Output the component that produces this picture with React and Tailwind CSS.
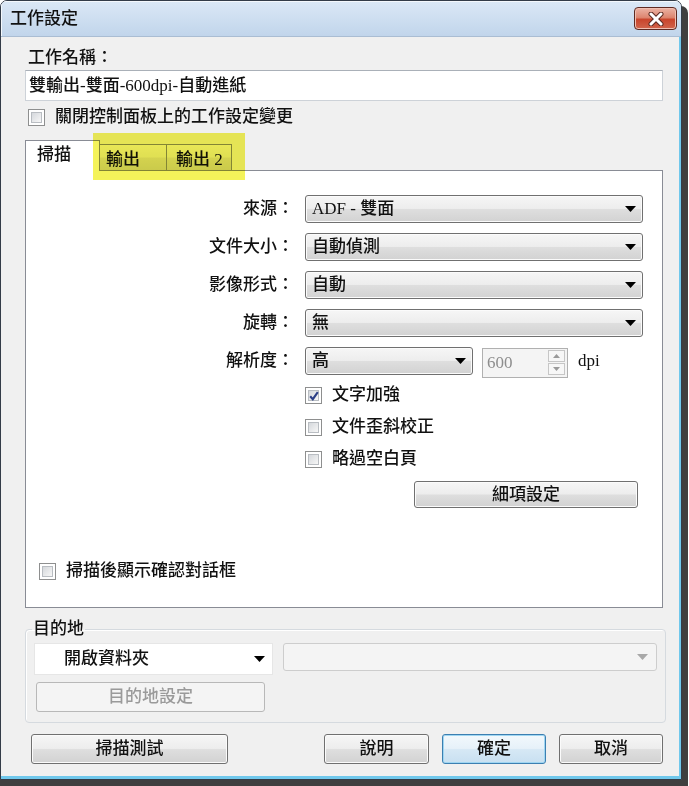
import React from 'react';

const btnBg =
  'bg-[linear-gradient(to_bottom,#f6f6f6,#ededed_48%,#dedede_52%,#d2d2d2)] shadow-[inset_0_0_0_1px_#fbfbfb]';

function Check({ checked }) {
  return (
    <span className="relative flex-none w-[17px] h-[17px] border border-[#8e8f8f] bg-white p-[2px]">
      <span className="block w-full h-full border border-[#b9bdc2] bg-[linear-gradient(135deg,#d5d8dc,#f7f7f7)]" />
      {checked && (
        <svg className="absolute left-[1px] top-[1px]" width="14" height="14" viewBox="0 0 14 14">
          <path d="M3.2 7.2 L5.8 10.2 L10.8 3.2" fill="none" stroke="#2c3f86" strokeWidth="2.1" />
        </svg>
      )}
    </span>
  );
}

function CheckRow({ label, checked, className = '' }) {
  return (
    <div className={`flex items-center gap-[10px] h-[22px] ${className}`}>
      <Check checked={checked} />
      <span className="leading-[22px] whitespace-nowrap">{label}</span>
    </div>
  );
}

function Arrow({ color = '#000' }) {
  return (
    <svg width="11" height="6" viewBox="0 0 11 6" className="flex-none">
      <path d="M0 0H11L5.5 6Z" fill={color} />
    </svg>
  );
}

function Select({ value, width }) {
  return (
    <div
      className={`h-[28px] flex items-center justify-between pl-[6px] pr-[6px] rounded-[3px] border border-[#707070] ${btnBg}`}
      style={{ width }}
    >
      <span className="leading-[22px] whitespace-nowrap">{value}</span>
      <Arrow />
    </div>
  );
}

function Button({ label, width, primary, disabled }) {
  let cls = `border-[#707070] ${btnBg}`;
  if (primary)
    cls =
      'border-[#3c7fb1] bg-[linear-gradient(to_bottom,#f2f8fc,#e6f1f9_48%,#d6e8f5_52%,#c8e0f1)] shadow-[inset_0_0_0_1px_#9fd6f2]';
  if (disabled) cls = 'border-[#b8b8b8] bg-[#f4f4f4] text-[#9a9a9a]';
  return (
    <div
      className={`h-[30px] flex-none flex items-center justify-center rounded-[3px] border ${cls}`}
      style={{ width }}
    >
      <span className="leading-[22px]">{label}</span>
    </div>
  );
}

function FormRow({ label, children }) {
  return (
    <div className="flex items-center h-[28px]">
      <div className="w-[268px] text-right leading-[22px] whitespace-nowrap">{label}</div>
      <div className="ml-[11px] flex items-center">{children}</div>
    </div>
  );
}

export default function App() {
  return (
    <div className="relative w-[689px] h-[786px] bg-white overflow-hidden font-['Liberation_Serif','Noto_Sans_CJK_TC',serif] font-medium text-[17px] text-[#111]">
      <div className="w-[682px] h-[780px] flex flex-col rounded-t-[7px] border border-[#333c48] bg-[#f0f0f0] shadow-[6px_6px_0_#3f3f3f,0_6px_0_#3f3f3f] overflow-hidden">
        {/* title bar */}
        <div className="h-[36px] flex-none flex items-center justify-between pl-[9px] pr-[4px] bg-[linear-gradient(to_bottom,#dbe8f6,#c1d5eb)] shadow-[inset_1px_1px_0_#f4f8fc] border-b border-[#aabdd3]">
          <span className="leading-[22px]">工作設定</span>
          <div className="w-[43px] h-[23px] rounded-[4px] border border-[#5e2a22] bg-[linear-gradient(to_bottom,#ebb3a4,#dd8670_45%,#c9452c_55%,#d1654c)] shadow-[inset_0_0_0_1px_#f0bfb2] flex items-center justify-center">
            <svg width="16" height="14" viewBox="0 0 16 14">
              <path d="M3 2 L13 12 M13 2 L3 12" stroke="#5a2a22" strokeWidth="5" strokeLinecap="round" />
              <path d="M3 2 L13 12 M13 2 L3 12" stroke="#ffffff" strokeWidth="3" strokeLinecap="round" />
            </svg>
          </div>
        </div>

        {/* client area */}
        <div className="flex-1 flex flex-col pl-[24px] pr-[16px] border-r-[2px] border-b-[3px] border-[#70c8ec]">
          <div className="mt-[10px] h-[22px] leading-[22px] pl-[3px]">工作名稱：</div>
          <div className="mt-[1px] h-[31px] flex items-center pl-[3px] bg-white border border-[#cdd2d8] border-t-[#aab0b8]">
            <span className="leading-[22px] whitespace-nowrap">雙輸出-雙面-600dpi-自動進紙</span>
          </div>
          <CheckRow className="mt-[5px] ml-[3px]" label="關閉控制面板上的工作設定變更" />

          {/* tabs */}
          <div className="relative mt-[12px] h-[30px] flex items-end">
            <div className="relative z-10 w-[75px] h-[31px] -mb-[1px] bg-white border border-b-0 border-[#898c95] pl-[11px] pt-[3px] leading-[22px]">
              掃描
            </div>
            <div className="w-[67px] h-[26px] border border-l-0 border-b-0 border-[#898c95] bg-[linear-gradient(to_bottom,#f3f3f3,#ebebeb_48%,#dedede_52%,#d4d4d4)] pl-[6px] pt-[4px] leading-[22px]">
              輸出
            </div>
            <div className="w-[65px] h-[26px] border border-l-0 border-b-0 border-[#898c95] bg-[linear-gradient(to_bottom,#f3f3f3,#ebebeb_48%,#dedede_52%,#d4d4d4)] pl-[9px] pt-[4px] leading-[22px] whitespace-nowrap">
              輸出 2
            </div>
            <div className="absolute z-20 left-[68px] -top-[7px] w-[152px] h-[47px] bg-[#f4f35a] mix-blend-multiply pointer-events-none" />
          </div>

          {/* tab panel */}
          <div className="h-[438px] bg-white border border-[#898c95] pt-[24px] flex flex-col">
            <div className="flex flex-col gap-[10px]">
              <FormRow label="來源：">
                <Select value="ADF - 雙面" width={338} />
              </FormRow>
              <FormRow label="文件大小：">
                <Select value="自動偵測" width={338} />
              </FormRow>
              <FormRow label="影像形式：">
                <Select value="自動" width={338} />
              </FormRow>
              <FormRow label="旋轉：">
                <Select value="無" width={338} />
              </FormRow>
              <FormRow label="解析度：">
                <Select value="高" width={168} />
                <div className="ml-[9px] mt-[3px] w-[86px] h-[30px] flex items-center justify-between pl-[4px] pr-[2px] bg-[#f4f4f4] border border-[#b0b0b0]">
                  <span className="text-[#8d8d8d] leading-[22px]">600</span>
                  <div className="flex flex-col gap-[1px]">
                    <div className="w-[17px] h-[12px] border border-[#c6c6c6] bg-[#f7f7f7] flex items-center justify-center">
                      <svg width="7" height="4" viewBox="0 0 7 4"><path d="M0 4H7L3.5 0Z" fill="#9a9a9a" /></svg>
                    </div>
                    <div className="w-[17px] h-[12px] border border-[#c6c6c6] bg-[#f7f7f7] flex items-center justify-center">
                      <svg width="7" height="4" viewBox="0 0 7 4"><path d="M0 0H7L3.5 4Z" fill="#9a9a9a" /></svg>
                    </div>
                  </div>
                </div>
                <span className="ml-[10px] leading-[22px]">dpi</span>
              </FormRow>
            </div>

            <div className="mt-[9px] pl-[279px] flex flex-col gap-[10px]">
              <CheckRow label="文字加強" checked />
              <CheckRow label="文件歪斜校正" />
              <CheckRow label="略過空白頁" />
            </div>

            <div className="mt-[11px] ml-[388px] w-[224px] h-[27px] flex items-center justify-center rounded-[3px] border border-[#707070] bg-[linear-gradient(to_bottom,#f6f6f6,#ededed_48%,#dedede_52%,#d2d2d2)] shadow-[inset_0_0_0_1px_#fbfbfb]">
              <span className="leading-[22px]">細項設定</span>
            </div>

            <CheckRow className="mt-[52px] ml-[13px]" label="掃描後顯示確認對話框" />
          </div>

          {/* destination group */}
          <fieldset className="mt-[10px] w-[640px] h-[105px] border border-[#d5dadf] rounded-[4px] shadow-[inset_1px_1px_0_#ffffff] px-[8px]">
            <legend className="ml-[-2px] px-[1px] h-[22px] leading-[22px]">目的地</legend>
            <div className="mt-[3px] flex items-start">
              <div className="w-[239px] h-[32px] flex items-center justify-between pl-[29px] pr-[7px] bg-white border border-[#e6e6e6]">
                <span className="leading-[22px]">開啟資料夾</span>
                <Arrow />
              </div>
              <div className="ml-[10px] w-[374px] h-[28px] flex items-center justify-end pr-[8px] rounded-[3px] bg-[#f4f4f4] border border-[#cdcdcd]">
                <Arrow color="#a8a8a8" />
              </div>
            </div>
            <div className="mt-[7px] ml-[2px]">
              <Button label="目的地設定" width={229} disabled />
            </div>
          </fieldset>

          {/* bottom buttons */}
          <div className="mt-[11px] flex">
            <div className="ml-[6px]">
              <Button label="掃描測試" width={197} />
            </div>
            <div className="ml-[96px]">
              <Button label="說明" width={105} />
            </div>
            <div className="ml-[13px]">
              <Button label="確定" width={104} primary />
            </div>
            <div className="ml-[13px]">
              <Button label="取消" width={104} />
            </div>
          </div>
        </div>
      </div>
    </div>
  );
}
